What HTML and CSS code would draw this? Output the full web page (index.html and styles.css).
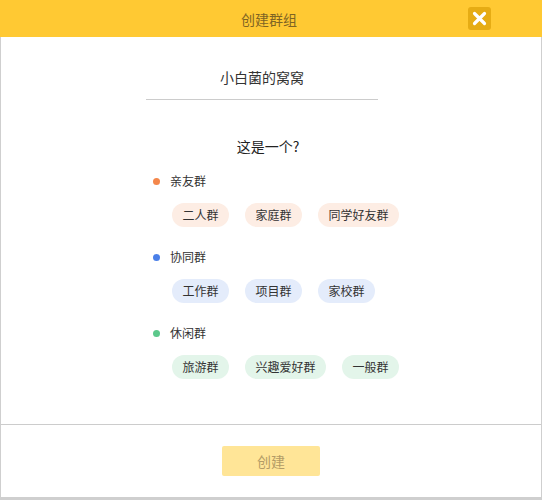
FILE: index.html
```html
<!DOCTYPE html>
<html lang="zh">
<head>
<meta charset="utf-8">
<link rel="stylesheet" href="styles.css">
</head>
<body>
<div class="dialog">
  <div class="header">
    <span></span>
    <div class="title">创建群组</div>
    <button class="close" aria-label="关闭">
      <svg width="23" height="23" viewBox="0 0 23 23"><path d="M6.5 6.5 L16.5 16.5 M16.5 6.5 L6.5 16.5" stroke="#fff" stroke-width="3.2" stroke-linecap="round" fill="none"/></svg>
    </button>
  </div>
  <div class="content">
    <div class="name-field">小白菌的窝窝</div>
    <div class="question">这是一个?</div>
    <div class="category cat-orange first">
      <div class="cat-label"><span class="dot"></span>亲友群</div>
      <div class="tags">
        <span class="tag">二人群</span>
        <span class="tag">家庭群</span>
        <span class="tag">同学好友群</span>
      </div>
    </div>
    <div class="category cat-blue">
      <div class="cat-label"><span class="dot"></span>协同群</div>
      <div class="tags">
        <span class="tag">工作群</span>
        <span class="tag">项目群</span>
        <span class="tag">家校群</span>
      </div>
    </div>
    <div class="category cat-green">
      <div class="cat-label"><span class="dot"></span>休闲群</div>
      <div class="tags">
        <span class="tag">旅游群</span>
        <span class="tag">兴趣爱好群</span>
        <span class="tag">一般群</span>
      </div>
    </div>
  </div>
  <div class="footer">
    <button class="create">创建</button>
  </div>
</div>
</body>
</html>
```

FILE: styles.css
```css
* { box-sizing: border-box; }
html, body {
  margin: 0;
  padding: 0;
  background: #fff;
}
body {
  font-family: "Noto Sans CJK SC", "Microsoft YaHei", "Noto Sans", sans-serif;
  color: #333;
}
.dialog {
  width: 542px;
  height: 500px;
  display: flex;
  flex-direction: column;
  border-left: 1px solid #cfcfcf;
  border-right: 1px solid #cfcfcf;
  border-bottom: 3px solid #cfcfcf;
}
.header {
  height: 37px;
  flex: none;
  background: #ffc933;
  display: grid;
  grid-template-columns: 1fr auto 1fr;
  align-items: center;
  margin: 0 -1px;
}
.title {
  font-size: 14px;
  color: #7f6424;
  line-height: 20px;
  padding-right: 4px;
}
.close {
  justify-self: end;
  margin-right: 51px;
  width: 23px;
  height: 23px;
  padding: 0;
  border: none;
  border-radius: 3px;
  background: #e6ac14;
  display: flex;
  align-items: center;
  justify-content: center;
}
.close svg { display: block; }
.content {
  flex: 1;
  display: flex;
  flex-direction: column;
}
.name-field {
  width: 232px;
  margin: 28px 0 0 145px;
  font-size: 14px;
  line-height: 24px;
  padding-bottom: 10px;
  text-align: center;
  border-bottom: 1px solid #cccccc;
  color: #333;
}
.question {
  margin-top: 36px;
  font-size: 14px;
  line-height: 20px;
  text-align: center;
  padding-right: 6px;
  color: #222;
}
.category {
  margin-top: 20px;
  padding-left: 152px;
}
.category.first { margin-top: 15px; }
.cat-label {
  display: flex;
  align-items: center;
  font-size: 12px;
  line-height: 20px;
  color: #333;
}
.dot {
  width: 7px;
  height: 7px;
  border-radius: 50%;
  margin-right: 10px;
}
.tags {
  display: flex;
  gap: 16px;
  margin-top: 12px;
  padding-left: 19px;
}
.tag {
  height: 24px;
  line-height: 24px;
  padding: 0 10.5px;
  border-radius: 12px;
  font-size: 12px;
  color: #333;
}
.cat-orange .dot { background: #f4874b; }
.cat-orange .tag { background: #fdede4; }
.cat-blue .dot { background: #4a7fe8; }
.cat-blue .tag { background: #e4ecfb; }
.cat-green .dot { background: #5cc88b; }
.cat-green .tag { background: #e3f5ea; }
.footer {
  flex: none;
  height: 73px;
  border-top: 1px solid #cccccc;
  display: flex;
  justify-content: center;
  align-items: flex-start;
  padding-top: 21px;
  margin: 0 -1px;
  border-left: 1px solid #cfcfcf;
  border-right: 1px solid #cfcfcf;
}
.create {
  width: 98px;
  height: 30px;
  border: none;
  border-radius: 2px;
  background: #ffe597;
  color: #b39c66;
  font-family: inherit;
  font-size: 14px;
  padding: 0;
}
```
